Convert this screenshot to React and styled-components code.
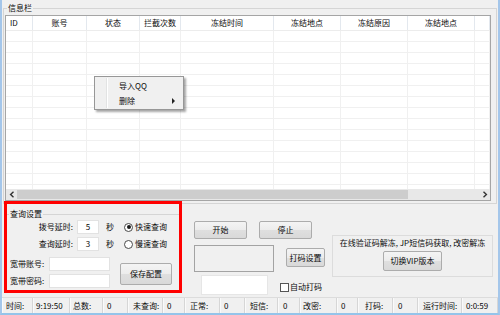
import React from 'react';
import styled, { createGlobalStyle } from 'styled-components';

const FONT = `"Noto Sans CJK SC", "Noto Sans", sans-serif`;

const Global = createGlobalStyle`
  html, body { margin: 0; padding: 0; background: #f0f0f0; }
  body { font-family: ${FONT}; font-size: 8px; line-height: 10px; color: #0a0a0a; }
  * { box-sizing: border-box; }
`;

const Window = styled.div`
  width: 500px;
  height: 315px;
  background: #f0f0f0;
  border-left: 2px solid #a4c6ea;
  border-right: 2px solid #a4c6ea;
  border-bottom: 2px solid #94c4ea;
  display: flex;
  flex-direction: column;
  overflow: hidden;
`;

const GroupBox = styled.div`
  margin: 8px 1px 0 1px;
  border: 1px solid #d5d5d5;
`;

const Legend = styled.div`
  display: table;
  position: relative;
  padding: 0 1px;
  margin: ${p => p.$top}px 0 0 ${p => p.$offset}px;
  background: #f0f0f0;
  font-size: 8px;
  line-height: 10px;
`;

const ListWrap = styled.div`
  padding: 2px 5px 2px 1px;
`;

const ListView = styled.div`
  position: relative;
  height: 186px;
  border: 1px solid #a5a5a5;
  background: #fff;
  display: flex;
  flex-direction: column;
  overflow: hidden;
`;

const HeaderRow = styled.div`
  display: flex;
  height: 15px;
  flex: none;
  border-bottom: 1px solid #ececec;
`;

const HeaderCell = styled.div`
  width: ${p => p.$w}px;
  flex: none;
  border-right: 1px solid #e3e8ee;
  text-align: ${p => (p.$left ? 'left' : 'center')};
  padding-left: ${p => (p.$left ? 4 : 0)}px;
  line-height: 14px;
  white-space: nowrap;
`;

const Body = styled.div`
  flex: 1;
  overflow: hidden;
`;

const BodyRow = styled.div`
  display: flex;
  height: 11px;
  border-bottom: 1px solid #f0f0f0;
`;

const BodyCell = styled.div`
  width: ${p => p.$w}px;
  flex: none;
  border-right: 1px solid #f0f0f0;
`;

const HScroll = styled.div`
  display: flex;
  height: 11px;
  flex: none;
  background: #e8e8e8;
`;

const ArrowBtn = styled.div`
  width: 11px;
  flex: none;
  display: flex;
  align-items: center;
  justify-content: center;
`;

const Thumb = styled.div`
  width: 391px;
  flex: none;
  background: #cdcdcd;
  margin: 1px 0;
`;

const Track = styled.div`
  flex: 1;
`;

const Menu = styled.div`
  position: absolute;
  left: 88px;
  top: 60px;
  width: 90px;
  height: 34px;
  background: #f0f0f0;
  border: 1px solid #979797;
  box-shadow: 2px 2px 2px rgba(0, 0, 0, 0.35);
  padding: 1px 2px;
  display: flex;
  flex-direction: column;
  &::before {
    content: '';
    position: absolute;
    left: 11px;
    top: 1px;
    bottom: 1px;
    width: 1px;
    background: #e2e3e3;
    box-shadow: 1px 0 0 #fff;
  }
`;

const MenuItem = styled.div`
  height: 15px;
  display: flex;
  align-items: center;
  padding-left: 22px;
  position: relative;
`;

const SubArrow = styled.span`
  position: absolute;
  right: 6px;
  top: 5px;
  width: 0;
  height: 0;
  border-top: 3px solid transparent;
  border-bottom: 3px solid transparent;
  border-left: 3px solid #222;
`;

const Lower = styled.div`
  display: flex;
  height: 93px;
  flex: none;
`;

const RedFrame = styled.div`
  position: relative;
  z-index: 1;
  width: 178px;
  height: 92px;
  margin: -3px 0 0 2px;
  border: 3px solid #ff0000;
  display: flex;
  flex-direction: column;
  background: #f0f0f0;
`;

const QueryGroup = styled.div`
  margin-top: 10px;
  border-top: 1px solid #d5d5d5;
  flex: 1;
`;

const Row = styled.div`
  display: flex;
  align-items: center;
  height: 14px;
  margin-top: ${p => p.$mt}px;
`;

const DelayLabel = styled.div`
  width: 66px;
  text-align: right;
  white-space: nowrap;
`;

const SmallInput = styled.div`
  width: 22px;
  height: 14px;
  margin-left: 4px;
  background: #fff;
  border: 1px solid #e2e2e2;
  text-align: center;
  line-height: 12px;
`;

const Unit = styled.div`
  margin-left: 7px;
  width: 8px;
`;

const Radio = styled.div`
  display: flex;
  align-items: center;
  margin-left: 10px;
  white-space: nowrap;
`;

const RadioDot = styled.span`
  width: 9px;
  height: 9px;
  border-radius: 50%;
  border: 1px solid #4a4a4a;
  background: #fff;
  margin-right: 2px;
  display: flex;
  align-items: center;
  justify-content: center;
  &::after {
    content: '';
    width: 4px;
    height: 4px;
    border-radius: 50%;
    background: ${p => (p.$on ? '#1a1a1a' : 'transparent')};
  }
`;

const AccountBlock = styled.div`
  display: flex;
  margin-top: 6px;
`;

const Fields = styled.div`
  display: flex;
  flex-direction: column;
`;

const FieldLabel = styled.div`
  width: 39px;
  padding-left: 3px;
  white-space: nowrap;
`;

const WideInput = styled.div`
  width: 61px;
  height: 14px;
  margin-left: 3px;
  background: #fff;
  border: 1px solid #e2e2e2;
`;

const Button = styled.div`
  width: ${p => p.$w}px;
  height: ${p => p.$h}px;
  margin-left: ${p => p.$ml || 0}px;
  margin-top: ${p => p.$mt || 0}px;
  flex: none;
  border: 1px solid #acacac;
  border-radius: 2px;
  background: linear-gradient(#f4f4f4, #ececec 50%, #dfdfdf 51%, #d9d9d9);
  display: flex;
  align-items: center;
  justify-content: center;
  white-space: nowrap;
`;

const RightArea = styled.div`
  flex: 1;
  display: flex;
  padding-left: 12px;
`;

const LeftStack = styled.div`
  width: 131px;
  padding-top: 17px;
  display: flex;
  flex-direction: column;
`;

const ButtonRow = styled.div`
  display: flex;
  gap: 12px;
`;

const MidRow = styled.div`
  display: flex;
  align-items: flex-start;
  margin-top: 6px;
`;

const Sunken = styled.div`
  width: 80px;
  height: 27px;
  border: 1px solid #a3a3a3;
  background: #f0f0f0;
`;

const BottomRow = styled.div`
  display: flex;
  align-items: center;
  margin-top: 3px;
`;

const WhiteBox = styled.div`
  width: 67px;
  height: 20px;
  margin-left: 7px;
  background: #fff;
  border: 1px solid #e6e6e6;
`;

const Check = styled.div`
  display: flex;
  align-items: center;
  margin-left: 12px;
  margin-top: 4px;
  white-space: nowrap;
`;

const CheckBox = styled.span`
  width: 9px;
  height: 9px;
  border: 1px solid #555;
  background: #fff;
  margin-right: 1px;
`;

const VipGroup = styled.div`
  width: 161px;
  height: 42px;
  margin: 31px 0 0 7px;
  border: 1px solid #dcdcdc;
  display: flex;
  flex-direction: column;
  align-items: center;
`;

const VipText = styled.div`
  margin-top: 2px;
  white-space: nowrap;
`;

const StatusBar = styled.div`
  display: flex;
  height: 16px;
  flex: none;
  border-top: 1px solid #dcdcdc;
`;

const Panel = styled.div`
  width: ${p => p.$w}px;
  flex: none;
  border-right: 1px solid #d6d6d6;
  box-shadow: inset 1px 0 0 #fafafa;
  padding-left: ${p => p.$pl || 3}px;
  line-height: 15px;
  white-space: nowrap;
`;

const columns = [
  { t: 'ID', w: 27, left: true },
  { t: '账号', w: 54 },
  { t: '状态', w: 53 },
  { t: '拦截次数', w: 41 },
  { t: '冻结时间', w: 93 },
  { t: '冻结地点', w: 67 },
  { t: '冻结原因', w: 67 },
  { t: '冻结地点', w: 67 },
  { t: '', w: 15 },
];

const status = [
  ['时间:', 31, 4],
  ['9:19:50', 37],
  ['总数:', 33],
  ['0', 25, 4],
  ['未查询:', 35, 5],
  ['0', 22, 4],
  ['正常:', 35, 5],
  ['0', 25, 4],
  ['短信:', 33, 5],
  ['0', 22, 5],
  ['改密:', 37],
  ['0', 21, 4],
  ['打码:', 35, 7],
  ['0', 25, 5],
  ['运行时间:', 44, 5],
  ['0:0:59', 36, 4],
];

const Chevron = ({ dir }) => (
  <svg width="6" height="7" viewBox="0 0 6 7">
    <path
      d={dir === 'left' ? 'M4.5 0.8 L1.6 3.5 L4.5 6.2' : 'M1.5 0.8 L4.4 3.5 L1.5 6.2'}
      fill="none"
      stroke="#333"
      strokeWidth="1.4"
    />
  </svg>
);

export default function App() {
  const rows = Array.from({ length: 15 });
  return (
    <>
      <Global />
      <Window>
        <GroupBox>
          <Legend $top={-6} $offset={3}>信息栏</Legend>
          <ListWrap>
            <ListView>
              <HeaderRow>
                {columns.map((c, i) => (
                  <HeaderCell key={i} $w={c.w} $left={c.left}>
                    {c.t}
                  </HeaderCell>
                ))}
              </HeaderRow>
              <Body>
                {rows.map((_, r) => (
                  <BodyRow key={r}>
                    {columns.map((c, i) => (
                      <BodyCell key={i} $w={c.w} />
                    ))}
                  </BodyRow>
                ))}
              </Body>
              <HScroll>
                <ArrowBtn>
                  <Chevron dir="left" />
                </ArrowBtn>
                <Thumb />
                <Track />
                <ArrowBtn>
                  <Chevron dir="right" />
                </ArrowBtn>
              </HScroll>
              <Menu>
                <MenuItem>导入QQ</MenuItem>
                <MenuItem>
                  删除
                  <SubArrow />
                </MenuItem>
              </Menu>
            </ListView>
          </ListWrap>
        </GroupBox>

        <Lower>
          <RedFrame>
            <QueryGroup>
              <Legend $top={-6} $offset={2}>查询设置</Legend>
              <Row $mt={1}>
                <DelayLabel>拨号延时:</DelayLabel>
                <SmallInput>5</SmallInput>
                <Unit>秒</Unit>
                <Radio>
                  <RadioDot $on />
                  快速查询
                </Radio>
              </Row>
              <Row $mt={3}>
                <DelayLabel>查询延时:</DelayLabel>
                <SmallInput>3</SmallInput>
                <Unit>秒</Unit>
                <Radio>
                  <RadioDot />
                  慢速查询
                </Radio>
              </Row>
              <AccountBlock>
                <Fields>
                  <Row $mt={0}>
                    <FieldLabel>宽带账号:</FieldLabel>
                    <WideInput />
                  </Row>
                  <Row $mt={3}>
                    <FieldLabel>宽带密码:</FieldLabel>
                    <WideInput />
                  </Row>
                </Fields>
                <Button $w={52} $h={22} $ml={10} $mt={6}>
                  保存配置
                </Button>
              </AccountBlock>
            </QueryGroup>
          </RedFrame>

          <RightArea>
            <LeftStack>
              <ButtonRow>
                <Button $w={53} $h={18}>开始</Button>
                <Button $w={53} $h={18}>停止</Button>
              </ButtonRow>
              <MidRow>
                <Sunken />
                <Button $w={39} $h={19} $ml={12} $mt={3}>
                  打码设置
                </Button>
              </MidRow>
              <BottomRow>
                <WhiteBox />
                <Check>
                  <CheckBox />
                  自动打码
                </Check>
              </BottomRow>
            </LeftStack>
            <VipGroup>
              <VipText>在线验证码解冻, JP短信码获取, 改密解冻</VipText>
              <Button $w={59} $h={20} $mt={3}>
                切换VIP版本
              </Button>
            </VipGroup>
          </RightArea>
        </Lower>

        <StatusBar>
          {status.map(([t, w, pl], i) => (
            <Panel key={i} $w={w} $pl={pl}>
              {t}
            </Panel>
          ))}
        </StatusBar>
      </Window>
    </>
  );
}
